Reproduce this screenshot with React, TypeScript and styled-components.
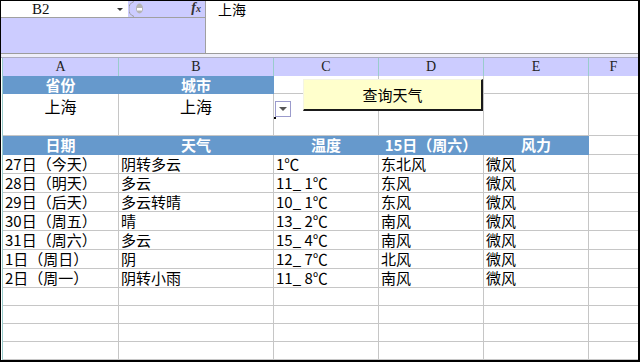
import React from "react"
import styled, { createGlobalStyle } from "styled-components"

const LAVENDER = "#ccccff"
const BAND = "#6699cc"
const GRID = "#c6c6c6"
const TEAL = "#99cccc"
const CJK = `"Noto Sans CJK SC", "Noto Sans", sans-serif`

const COLUMNS = ["A", "B", "C", "D", "E", "F"]

type CellData = { text?: string; band?: boolean; center?: boolean }

const forecast = [
  ["27日（今天）", "阴转多云", "1℃", "东北风", "微风"],
  ["28日（明天）", "多云", "11_ 1℃", "东风", "微风"],
  ["29日（后天）", "多云转晴", "10_ 1℃", "东风", "微风"],
  ["30日（周五）", "晴", "13_ 2℃", "南风", "微风"],
  ["31日（周六）", "多云", "15_ 4℃", "南风", "微风"],
  ["1日（周日）", "阴", "12_ 7℃", "北风", "微风"],
  ["2日（周一）", "阴转小雨", "11_ 8℃", "南风", "微风"],
]

const pad = (cells: CellData[]): CellData[] =>
  [...cells, ...Array(6 - cells.length).fill({})]

const rows: { h: number; lh: number; size?: number; cells: CellData[] }[] = [
  {
    h: 18,
    lh: 17,
    cells: pad([
      { text: "省份", band: true, center: true },
      { text: "城市", band: true, center: true },
    ]),
  },
  {
    h: 25,
    lh: 25,
    size: 16,
    cells: pad([
      { text: "上海", center: true },
      { text: "上海", center: true },
    ]),
  },
  { h: 17, lh: 16, cells: pad([]) },
  {
    h: 19,
    lh: 18,
    cells: pad(
      ["日期", "天气", "温度", "15日（周六）", "风力"].map((text) => ({
        text,
        band: true,
        center: true,
      }))
    ),
  },
  ...forecast.map((r) => ({
    h: 19,
    lh: 18,
    cells: pad(r.map((text) => ({ text }))),
  })),
  ...Array.from({ length: 4 }, () => ({ h: 18, lh: 17, cells: pad([]) })),
]

export default function App() {
  return (
    <>
      <GlobalStyle />
      <Frame>
        <Toolbar>
          <NamePanel>
            <NameRow>
              <NameBox>
                B2
                <Caret />
              </NameBox>
              <CancelIcon width="15" height="16" viewBox="0 0 15 16">
                <path d="M5 0.5 A8 8 0 0 0 5 15.5" fill="none" stroke="#9a9a9a" />
                <ellipse cx="10.5" cy="7.5" rx="3.5" ry="5" fill="#b4b4b4" />
                <rect x="8" y="7" width="5" height="2.5" fill="#fff" />
              </CancelIcon>
              <Fx>
                f<small>x</small>
              </Fx>
            </NameRow>
          </NamePanel>
          <Formula>上海</Formula>
        </Toolbar>
        <Splitter />
        <Sheet>
          <HeaderRow>
            {COLUMNS.map((c, i) => (
              <ColumnHead key={c} $last={i === COLUMNS.length - 1}>
                {c}
              </ColumnHead>
            ))}
          </HeaderRow>
          {rows.map((row, ri) => (
            <Row key={ri} $h={row.h} $lh={row.lh} $size={row.size ?? 15}>
              {row.cells.map((cell, ci) => (
                <Cell
                  key={ci}
                  $band={cell.band}
                  $center={cell.center}
                  $last={ci === 5}
                >
                  {cell.text}
                </Cell>
              ))}
            </Row>
          ))}
          <ListArrow>
            <span />
          </ListArrow>
          <FillHandle />
          <QueryButton>查询天气</QueryButton>
        </Sheet>
      </Frame>
    </>
  )
}

const GlobalStyle = createGlobalStyle`
  body {
    margin: 0;
    background: #fff;
  }
`

const Frame = styled.div`
  box-sizing: border-box;
  width: 640px;
  height: 362px;
  border-style: solid;
  border-color: #000;
  border-width: 1px 2px 2px 1px;
  overflow: hidden;
  background: #fff;
`

const Toolbar = styled.div`
  display: flex;
  height: 52px;
`

const NamePanel = styled.div`
  width: 204px;
  border-right: 1px solid #a0a0a0;
  background: ${LAVENDER};
`

const NameRow = styled.div`
  box-sizing: border-box;
  display: flex;
  align-items: flex-start;
  height: 17px;
  border-bottom: 1px solid #a0a0a0;
`

const NameBox = styled.div`
  box-sizing: border-box;
  display: flex;
  align-items: center;
  width: 127px;
  height: 16px;
  padding: 0 5px 0 31px;
  background: #fff;
  font: 15px/16px "Liberation Serif", serif;
  color: #111;
`

const Caret = styled.span`
  margin-left: auto;
  width: 0;
  height: 0;
  border-left: 3px solid transparent;
  border-right: 3px solid transparent;
  border-top: 3px solid #333;
`

const CancelIcon = styled.svg`
  display: block;
  margin-left: 1px;
`

const Fx = styled.span`
  margin-left: auto;
  margin-right: 4px;
  font: italic bold 14px/14px "Liberation Serif", serif;
  color: #333;
  small {
    font-size: 10px;
  }
`

const Formula = styled.div`
  flex: 1;
  padding-left: 12px;
  font: 14px/17px ${CJK};
  color: #000;
`

const Splitter = styled.div`
  height: 3px;
  border-top: 1px solid #9c9c9c;
  border-bottom: 1px solid #acacc0;
  background: #eeeefa;
`

const Sheet = styled.div`
  position: relative;
  padding-left: 1px;
`

const HeaderRow = styled.div`
  display: grid;
  grid-template-columns: 116px 155px 105px 105px 105px 49px;
  height: 18px;
  border-left: 1px solid ${TEAL};
`

const ColumnHead = styled.div<{ $last?: boolean }>`
  border-right: ${(p) => (p.$last ? "none" : `1px solid ${TEAL}`)};
  background: ${LAVENDER};
  text-align: center;
  font: 14px/18px "Liberation Serif", serif;
  color: #222;
`

const Row = styled.div<{ $h: number; $lh: number; $size: number }>`
  display: grid;
  grid-template-columns: 116px 155px 105px 105px 105px 49px;
  height: ${(p) => p.$h}px;
  line-height: ${(p) => p.$lh}px;
  font-size: ${(p) => p.$size}px;
  font-family: ${CJK};
  border-left: 1px solid ${TEAL};
`

const Cell = styled.div<{ $band?: boolean; $center?: boolean; $last?: boolean }>`
  box-sizing: border-box;
  min-width: 0;
  padding-left: ${(p) => (p.$center ? 0 : 2)}px;
  border-right: ${(p) =>
    p.$last ? "none" : `1px solid ${p.$band ? BAND : GRID}`};
  border-bottom: 1px solid ${(p) => (p.$band ? BAND : GRID)};
  background: ${(p) => (p.$band ? BAND : "#fff")};
  color: ${(p) => (p.$band ? "#fff" : "#000")};
  font-weight: ${(p) => (p.$band ? 700 : 400)};
  text-align: ${(p) => (p.$center ? "center" : "left")};
  white-space: pre;
`

const ListArrow = styled.div`
  position: absolute;
  left: 274px;
  top: 43px;
  box-sizing: border-box;
  width: 16px;
  height: 16px;
  border: 1px solid #9b9bcc;
  background: #fff;
  display: flex;
  align-items: center;
  justify-content: center;
  span {
    width: 0;
    height: 0;
    border-left: 4px solid transparent;
    border-right: 4px solid transparent;
    border-top: 4px solid #555;
  }
`

const FillHandle = styled.div`
  position: absolute;
  left: 273px;
  top: 59px;
  width: 2px;
  height: 2px;
  background: #000;
`

const QueryButton = styled.div`
  position: absolute;
  left: 302px;
  top: 21px;
  box-sizing: border-box;
  width: 180px;
  height: 32px;
  border-style: solid;
  border-width: 1px 2px 2px 1px;
  border-color: #f4f4e4 #1a1a1a #1a1a1a #f4f4e4;
  background: #ffffcc;
  display: flex;
  align-items: center;
  justify-content: center;
  font: 15px ${CJK};
  color: #000;
`
